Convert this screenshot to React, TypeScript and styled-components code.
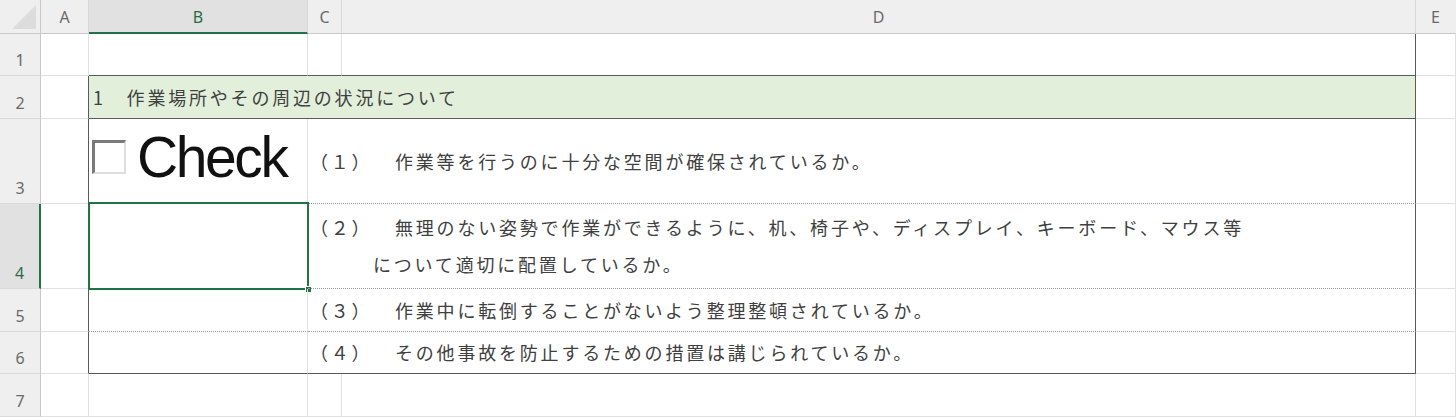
import React from "react";
import styled, { createGlobalStyle, css } from "styled-components";

const GlobalStyle = createGlobalStyle`
  html, body { margin: 0; padding: 0; background: #ffffff; overflow: hidden; }
  * { box-sizing: border-box; }
`;

const GRID = "#e1e1e1";
const HEAD_LINE = "#c8c8c8";
const TABLE = "#5a5a5a";
const DOT = "1px dotted #9a9a9a";
const GREEN = "#217346";
const TEXT = "#404040";

const Sheet = styled.div`
  display: grid;
  grid-template-columns: 41px 48px 219px 34px 1074px 40px;
  grid-template-rows: 34px 42px 43px 85px 85px 43px 42px 43px;
  width: 1456px;
  height: 417px;
  font-family: "Noto Sans CJK JP", "Noto Sans", sans-serif;
`;

const Corner = styled.div`
  background: #efefef;
  border-right: 1px solid ${HEAD_LINE};
  border-bottom: 1px solid ${HEAD_LINE};
  display: flex;
  align-items: flex-end;
  justify-content: flex-end;
  padding: 0 4px 4px 0;
`;

const CornerTriangle = styled.div`
  width: 0;
  height: 0;
  border-left: 24px solid transparent;
  border-bottom: 24px solid #dcdcdc;
`;

const ColHeader = styled.div<{ $selected?: boolean; $last?: boolean }>`
  display: flex;
  align-items: center;
  justify-content: center;
  background: ${(p) => (p.$selected ? "#e1e1e1" : "#efefef")};
  border-right: 1px solid ${(p) => (p.$last ? "transparent" : "#d8d8d8")};
  border-bottom: ${(p) => (p.$selected ? `2px solid ${GREEN}` : `1px solid ${HEAD_LINE}`)};
  font-family: "Noto Sans", "Open Sans", sans-serif;
  font-size: 16px;
  color: ${(p) => (p.$selected ? "#2d6b47" : "#6a6a6a")};
  padding-top: ${(p) => (p.$selected ? "1px" : "0")};
`;

const RowHeader = styled.div<{ $selected?: boolean }>`
  display: flex;
  align-items: flex-end;
  justify-content: center;
  padding-bottom: 4px;
  background: ${(p) => (p.$selected ? "#e1e1e1" : "#efefef")};
  border-right: ${(p) => (p.$selected ? `2px solid ${GREEN}` : `1px solid ${HEAD_LINE}`)};
  border-bottom: 1px solid #dadada;
  font-family: "Noto Sans", "Open Sans", sans-serif;
  font-size: 16px;
  color: ${(p) => (p.$selected ? "#2d6b47" : "#6a6a6a")};
`;

type CellProps = {
  $right?: string;
  $bottom?: string;
  $fill?: string;
  $span?: number;
};

const Cell = styled.div<CellProps>`
  position: relative;
  border-right: ${(p) => p.$right ?? `1px solid ${GRID}`};
  border-bottom: ${(p) => p.$bottom ?? `1px solid ${GRID}`};
  background: ${(p) => p.$fill ?? "transparent"};
  ${(p) =>
    p.$span &&
    css`
      grid-column: span ${p.$span};
    `}
`;

const TitleCell = styled(Cell)`
  display: flex;
  align-items: center;
  padding-left: 4px;
  font-size: 18px;
  letter-spacing: 2.8px;
  color: ${TEXT};
  white-space: pre;
  text-spacing-trim: space-all;
`;

const ItemCell = styled(Cell)`
  display: flex;
  flex-direction: column;
  justify-content: center;
  padding-left: 2px;
  font-size: 18px;
  letter-spacing: 2.8px;
  line-height: 37px;
  color: ${TEXT};
  white-space: pre;
  text-spacing-trim: space-all;
`;

const ItemLine = styled.div<{ $indent?: number }>`
  display: flex;
  padding-left: ${(p) => p.$indent ?? 0}px;
`;

const ItemNum = styled.span`
  display: inline-block;
  width: 85px;
`;

const CheckCell = styled(Cell)`
  display: flex;
  align-items: center;
  gap: 11px;
  padding: 0 0 8px 3px;
`;

const CheckBox = styled.span`
  display: inline-block;
  width: 34px;
  height: 34px;
  border-top: 3px solid #7a7a7a;
  border-left: 3px solid #7a7a7a;
  border-bottom: 2px solid #dedede;
  border-right: 2px solid #dedede;
  background: #ffffff;
`;

const CheckLabel = styled.span`
  font-family: "Liberation Sans", Arial, sans-serif;
  font-size: 57px;
  letter-spacing: -2.4px;
  line-height: 1;
  color: #111111;
`;

const Selection = styled.div`
  position: absolute;
  top: -2px;
  left: -1px;
  right: -2px;
  bottom: -2px;
  border: 2px solid ${GREEN};
  pointer-events: none;
`;

const FillHandle = styled.div`
  position: absolute;
  right: -5px;
  bottom: -5px;
  width: 7px;
  height: 7px;
  background: ${GREEN};
  border: 1px solid #ffffff;
`;

const cols = ["A", "B", "C", "D", "E"];

const Item = ({ num, text }: { num: string; text: string }) => (
  <ItemLine>
    <ItemNum>{num}</ItemNum>
    <span>{text}</span>
  </ItemLine>
);

export default function App() {
  const solid = `1px solid ${TABLE}`;
  return (
    <>
      <GlobalStyle />
      <Sheet>
        {/* header row */}
        <Corner>
          <CornerTriangle />
        </Corner>
        {cols.map((c, i) => (
          <ColHeader key={c} $selected={c === "B"} $last={i === cols.length - 1}>
            {c}
          </ColHeader>
        ))}

        {/* row 1 */}
        <RowHeader>1</RowHeader>
        <Cell />
        <Cell $bottom={solid} />
        <Cell $bottom={solid} />
        <Cell $bottom={solid} $right={solid} />
        <Cell />

        {/* row 2 */}
        <RowHeader>2</RowHeader>
        <Cell $right={solid} />
        <TitleCell $span={3} $fill="#e2efda" $bottom={solid} $right={solid}>
          {"1　作業場所やその周辺の状況について"}
        </TitleCell>
        <Cell />

        {/* row 3 */}
        <RowHeader>3</RowHeader>
        <Cell $right={solid} />
        <CheckCell $bottom={DOT}>
          <CheckBox />
          <CheckLabel>Check</CheckLabel>
        </CheckCell>
        <ItemCell $span={2} $bottom={DOT} $right={solid}>
          <Item num="（１）" text="作業等を行うのに十分な空間が確保されているか。" />
        </ItemCell>
        <Cell />

        {/* row 4 */}
        <RowHeader $selected>4</RowHeader>
        <Cell $right={solid} />
        <Cell $bottom={DOT}>
          <Selection>
            <FillHandle />
          </Selection>
        </Cell>
        <ItemCell $span={2} $bottom={DOT} $right={solid}>
          <Item
            num="（２）"
            text="無理のない姿勢で作業ができるように、机、椅子や、ディスプレイ、キーボード、マウス等"
          />
          <ItemLine $indent={63}>について適切に配置しているか。</ItemLine>
        </ItemCell>
        <Cell />

        {/* row 5 */}
        <RowHeader>5</RowHeader>
        <Cell $right={solid} />
        <Cell $bottom={DOT} />
        <ItemCell $span={2} $bottom={DOT} $right={solid}>
          <Item num="（３）" text="作業中に転倒することがないよう整理整頓されているか。" />
        </ItemCell>
        <Cell />

        {/* row 6 */}
        <RowHeader>6</RowHeader>
        <Cell $right={solid} />
        <Cell $bottom={solid} />
        <ItemCell $span={2} $bottom={solid} $right={solid}>
          <Item num="（４）" text="その他事故を防止するための措置は講じられているか。" />
        </ItemCell>
        <Cell />

        {/* row 7 */}
        <RowHeader>7</RowHeader>
        <Cell />
        <Cell />
        <Cell />
        <Cell />
        <Cell />
      </Sheet>
    </>
  );
}
